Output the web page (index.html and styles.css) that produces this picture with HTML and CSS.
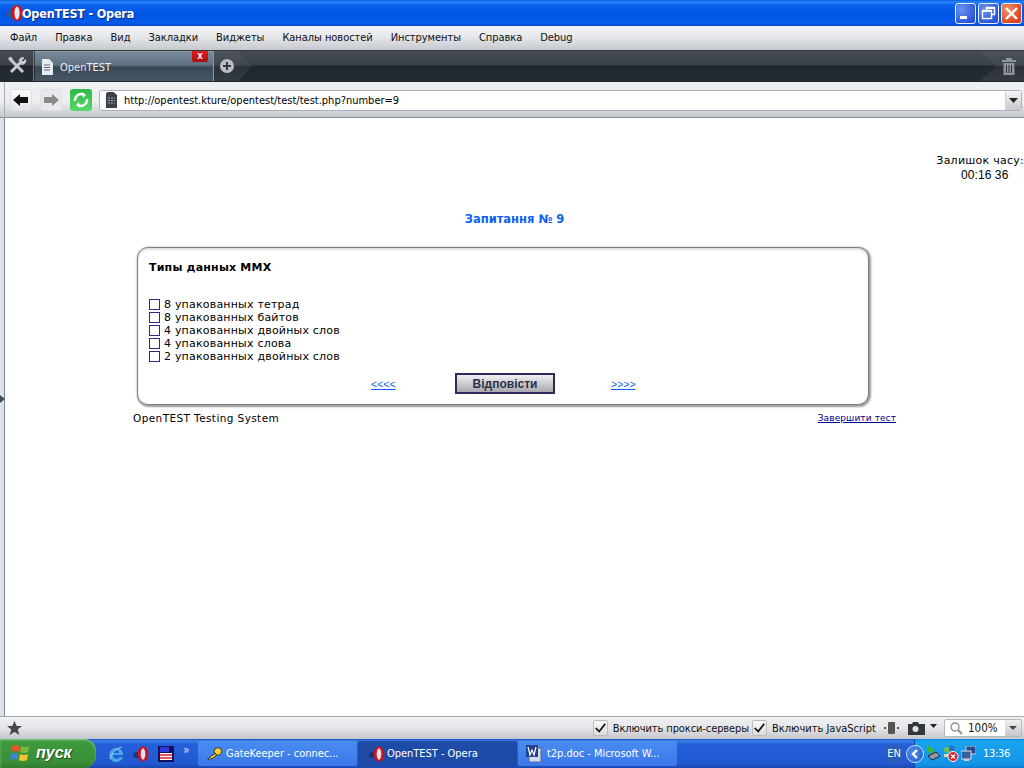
FILE: index.html
```html
<!DOCTYPE html>
<html lang="uk">
<head>
<meta charset="utf-8">
<title>OpenTEST - Opera</title>
<link rel="stylesheet" href="styles.css">
</head>
<body>
<div class="window">
  <header class="titlebar">
    <svg class="title-logo" width="20" height="20" viewBox="0 0 20 20"><ellipse cx="7" cy="11" rx="6" ry="4" fill="#555" opacity=".55"/><ellipse cx="12" cy="10" rx="6" ry="8" fill="#d0131b"/><ellipse cx="12" cy="10" rx="2.6" ry="6.4" fill="#dfe8f5"/></svg>
    <span class="title-text">OpenTEST - Opera</span>
    <div class="win-buttons">
      <span class="win-btn"><svg width="21" height="21" viewBox="0 0 21 21"><rect x="5" y="13" width="7" height="3" fill="#fff"/></svg></span>
      <span class="win-btn"><svg width="21" height="21" viewBox="0 0 21 21" fill="none" stroke="#fff"><path d="M8.5 7.5V4.5h8v7h-3" stroke-width="1.4"/><rect x="4.5" y="7.5" width="9" height="8" stroke-width="1.4"/><path d="M8.5 5h8M4.5 8h9" stroke-width="2"/></svg></span>
      <span class="win-btn win-close"><svg width="21" height="21" viewBox="0 0 21 21" stroke="#fff" stroke-width="2.4"><path d="M5 5l11 11M16 5L5 16"/></svg></span>
    </div>
  </header>
  <nav class="menubar">
    <span>Файл</span><span>Правка</span><span>Вид</span><span>Закладки</span><span>Виджеты</span><span>Каналы новостей</span><span>Инструменты</span><span>Справка</span><span>Debug</span>
  </nav>
  <div class="tabbar">
    <span class="tools"><svg width="20" height="20" viewBox="0 0 20 20" fill="none" stroke="#c8ccd0"><path d="M4 16L15 5" stroke-width="3"/><path d="M12 4.5a3.6 3.6 0 0 1 5 -2.5l-2.5 2.500 1.500 1.500 2.500-2.500a3.600 3.600 0 0 1-5 4.500" fill="#c8ccd0" stroke-width="1"/><path d="M3 3l13 13" stroke-width="3"/><path d="M1.500 2.500l2-1.500 2 2-2 2z" fill="#c8ccd0" stroke-width="1"/></svg></span>
    <div class="tab">
      <svg width="12" height="16" viewBox="0 0 12 16"><path d="M1 0h7l4 4v12H1z" fill="#e8ebee"/><path d="M3 6h6M3 8.500h6M3 11h6" stroke="#667" stroke-width="1"/></svg>
      <span class="tab-title">OpenTEST</span>
      <span class="tab-close">x</span>
    </div>
    <span class="new-tab"><svg width="14" height="14" viewBox="0 0 14 14"><circle cx="7" cy="7" r="7" fill="#b9bdc1"/><path d="M7 3v8M3 7h8" stroke="#33393f" stroke-width="2"/></svg></span>
    <span class="tab-spacer"></span>
    <span class="trash"><svg width="14" height="17" viewBox="0 0 14 17" fill="#8f9498"><rect x="0" y="2" width="14" height="2"/><rect x="4" y="0" width="6" height="2"/><path d="M1.500 5h11v12h-11zM4 7v8h1V7zM6.500 7v8h1V7zM9 7v8h1V7z" fill-rule="evenodd"/></svg></span>
  </div>
  <div class="addressbar">
    <span class="nav-btn"><svg width="16" height="12" viewBox="0 0 16 12"><path d="M0 6l7-6v3h8v6H7v3z" fill="#111"/></svg></span>
    <span class="nav-btn nav-off"><svg width="16" height="12" viewBox="0 0 16 12"><path d="M16 6L9 0v3H1v6h8v3z" fill="#8a8a8a"/></svg></span>
    <span class="nav-btn nav-reload"><svg width="18" height="18" viewBox="0 0 18 18" fill="none" stroke="#fff" stroke-width="2.400"><path d="M3 10a6 6 0 0 1 9-6"/><path d="M15 8a6 6 0 0 1-9 6"/><path d="M10 1l4 3-3 3z" fill="#fff" stroke="none"/><path d="M8 17l-4-3 3-3z" fill="#fff" stroke="none"/></svg></span>
    <div class="urlfield">
      <svg class="url-icon" width="11" height="16" viewBox="0 0 11 16"><path d="M0 1.500L1.500 0h6L11 3v13H0z" fill="#3c4148"/><path d="M2 6h7M2 8.500h7M2 11h7" stroke="#a9adb2" stroke-dasharray="2 1"/></svg>
      <span class="url-text">http://opentest.kture/opentest/test/test.php?number=9</span>
      <span class="url-drop"><svg width="9" height="5" viewBox="0 0 9 5"><path d="M0 0h9L4.500 5z" fill="#222"/></svg></span>
    </div>
  </div>
  <div class="workspace">
    <div class="rail"><span class="panel-arrow"></span></div>
    <main class="viewport">
      <div class="timer">
        <div>Залишок часу:</div>
        <div class="timer-value">00:16 36</div>
      </div>
      <h1 class="question-no">Запитання № 9</h1>
      <section class="card">
        <h2 class="question">Типы данных MMX</h2>
        <ul class="options">
          <li><input type="checkbox" class="opt-box"><span>8 упакованных тетрад</span></li>
          <li><input type="checkbox" class="opt-box"><span>8 упакованных байтов</span></li>
          <li><input type="checkbox" class="opt-box"><span>4 упакованных двойных слов</span></li>
          <li><input type="checkbox" class="opt-box"><span>4 упакованных слова</span></li>
          <li><input type="checkbox" class="opt-box"><span>2 упакованных двойных слов</span></li>
        </ul>
        <div class="actions">
          <a class="pager" href="#">&lt;&lt;&lt;&lt;</a>
          <button class="answer" type="button">Відповісти</button>
          <a class="pager" href="#">&gt;&gt;&gt;&gt;</a>
        </div>
      </section>
      <footer class="page-foot">
        <span>OpenTEST Testing System</span>
        <a class="finish" href="#">Завершити тест</a>
      </footer>
    </main>
  </div>
  <div class="statusbar">
    <svg class="star" width="15" height="15" viewBox="0 0 15 15"><path d="M7.500 0l2.200 5h5.300l-4.200 3.500 1.600 5.500-4.900-3-4.900 3 1.600-5.500L0 5h5.300z" fill="#44484d"/></svg>
    <span class="status-spacer"></span>
    <label class="status-check status-proxy"><span class="check-box"><svg width="15" height="14" viewBox="0 0 15 14"><path d="M2 7l4 4 7-9" fill="none" stroke="#111" stroke-width="2"/></svg></span>Включить прокси-серверы</label>
    <label class="status-check"><span class="check-box"><svg width="15" height="14" viewBox="0 0 15 14"><path d="M2 7l4 4 7-9" fill="none" stroke="#111" stroke-width="2"/></svg></span>Включить JavaScript</label>
    <svg class="status-ico" width="15" height="14" viewBox="0 0 15 14"><rect x="4" y="1" width="7" height="12" rx="1" fill="#555"/><path d="M0 7h2M13 7h2" stroke="#555" stroke-width="2"/></svg>
    <svg class="camera" width="17" height="13" viewBox="0 0 17 13"><path d="M0 2h4l1-2h5l1 2h6v11H0z" fill="#33373c"/><circle cx="7.500" cy="7" r="3" fill="#dfe1e4"/></svg>
    <svg class="cam-drop" width="7" height="4" viewBox="0 0 7 4"><path d="M0 0h7L3.500 4z" fill="#222"/></svg>
    <div class="zoom-field">
      <svg width="13" height="13" viewBox="0 0 13 13" fill="none" stroke="#8a8f96"><circle cx="5" cy="5" r="4" stroke-width="1.300"/><path d="M8 8l4 4" stroke-width="2"/></svg>
      <span class="zoom-value">100%</span>
      <span class="zoom-drop"><svg width="8" height="4" viewBox="0 0 8 4"><path d="M0 0h8L4 4z" fill="#444"/></svg></span>
    </div>
  </div>
  <div class="taskbar">
    <div class="start">
      <svg width="20" height="19" viewBox="0 0 20 19"><path d="M2 3q4-2 7 0v6q-3-2-8 0z" fill="#e5562d"/><path d="M11 3q4 2 8 0l-1 6q-4 2-8 0z" fill="#7cb83c"/><path d="M1 11q4-2 7 0v6q-3-2-8 0z" fill="#3f84d8"/><path d="M10 11q4 2 8 0l-1 6q-4 2-8 0z" fill="#f4c52c"/></svg>
      <span class="start-label">пуск</span>
    </div>
    <div class="quick">
      <svg width="16" height="16" viewBox="0 0 16 16"><path d="M15 9H5a3.500 3.500 0 0 0 6.500 2H15a7 7 0 1 1-1-6c1 1 1 3 1 4zM5 7h6a3 3 0 0 0-6 0z" fill="#46a9e6"/><path d="M2 13C3 7 9 2 14 1" fill="none" stroke="#9fd4f2"/></svg>
      <svg width="16" height="16" viewBox="0 0 16 16"><ellipse cx="4" cy="9" rx="4" ry="3" fill="#124" opacity=".6"/><ellipse cx="10" cy="8" rx="5.500" ry="7.500" fill="#d0131b"/><ellipse cx="10" cy="8" rx="2.300" ry="5.800" fill="#dbe5f5"/></svg>
      <svg width="16" height="16" viewBox="0 0 16 16"><rect width="16" height="16" fill="#10105c"/><rect x="2" y="1" width="9" height="5" fill="#2d3ad8"/><rect x="2" y="7" width="12" height="7" fill="#fff"/><path d="M2 9h12M2 12h12" stroke="#e01b24" stroke-width="1.500"/></svg>
      <span class="more">»</span>
    </div>
    <div class="task">
      <svg class="key" width="17" height="16" viewBox="0 0 20 16"><circle cx="14" cy="5" r="4.500" fill="#f6d32d" stroke="#222"/><path d="M11 7L2 14l2 1 2-2 1 1 2-2 1 0 2-3z" fill="#f6d32d" stroke="#222"/></svg>
      <span>GateKeeper - connec...</span>
    </div>
    <div class="task task-active">
      <svg width="16" height="16" viewBox="0 0 16 16"><ellipse cx="4" cy="9" rx="4" ry="3" fill="#124" opacity=".6"/><ellipse cx="10" cy="8" rx="5.500" ry="7.500" fill="#d0131b"/><ellipse cx="10" cy="8" rx="2.300" ry="5.800" fill="#dbe5f5"/></svg>
      <span>OpenTEST - Opera</span>
    </div>
    <div class="task task-doc">
      <svg width="16" height="17" viewBox="0 0 16 17"><rect x="3" y="3" width="12" height="14" fill="#cfdaf0" stroke="#667"/><rect x="0" y="0" width="12" height="12" fill="#23408f"/><path d="M2 2l2 8 2-5 2 5 2-8" fill="none" stroke="#fff" stroke-width="1.200"/></svg>
      <span>t2p.doc - Microsoft W...</span>
    </div>
    <span class="lang">EN</span>
    <div class="tray">
      <span class="tray-chevron"><svg width="10" height="10" viewBox="0 0 10 10"><path d="M7 1L3 5l4 4" fill="none" stroke="#fff" stroke-width="2.400"/></svg></span>
      <svg width="14" height="16" viewBox="0 0 14 16"><path d="M1 0l6 3-2 5-4-2z" fill="#3fb52f"/><path d="M1 10l8-4 4 4-8 4z" fill="#8f99a1" stroke="#223"/></svg>
      <svg class="tray-msn" width="16" height="17" viewBox="0 0 16 17"><circle cx="4" cy="5" r="3" fill="#6fbf4a"/><circle cx="9" cy="3.500" r="3" fill="#2c6fc8"/><path d="M1 9h10v3H1z" fill="#cfe0a8"/><circle cx="10" cy="11.500" r="5" fill="#d8222a" stroke="#fff"/><path d="M8 9.500l4 4M12 9.500l-4 4" stroke="#fff" stroke-width="1.400"/></svg>
      <svg width="15" height="16" viewBox="0 0 15 16"><rect x="5" y="0" width="10" height="8" fill="#264a90" stroke="#ccd"/><rect x="0" y="5" width="10" height="8" fill="#35619f" stroke="#dde"/><rect x="3" y="13" width="5" height="2" fill="#ccd"/></svg>
      <span class="clock">13:36</span>
    </div>
  </div>
</div>
</body>
</html>
```
FILE: styles.css
```css
* { box-sizing: border-box; }
html, body { margin: 0; padding: 0; height: 100%; overflow: hidden; }
body { font-family: "DejaVu Sans", sans-serif; font-size: 11px; color: #000; background: #fff; }
.window { width: 1024px; height: 768px; display: flex; flex-direction: column; }

/* title bar */
.titlebar { height: 26px; flex: none; display: flex; align-items: center; padding: 0 2px 0 5px;
  background: linear-gradient(#0a5be0 0, #2a86f8 2px, #0a62ea 5px, #0055e5 14px, #0258e8 20px, #0a5ce8 23px, #0043c8 26px); }
.title-logo { flex: none; margin-right: -3px; }
.title-text { font: bold 12.500px "DejaVu Sans Condensed", "DejaVu Sans", sans-serif; letter-spacing: -.2px; color: #fff; text-shadow: 1px 1px 0 #0a2a80; }
.win-buttons { margin-left: auto; display: flex; gap: 2px; }
.win-btn { width: 21px; height: 21px; border: 1px solid #e8eefc; border-radius: 3px; background: radial-gradient(circle at 30% 30%, #6d94ee, #2a55d6 75%); display: flex; align-items: center; justify-content: center; }
.win-btn svg { flex: none; }
.win-close { background: radial-gradient(circle at 30% 30%, #f0946c, #d8431c 75%); }

/* menu */
.menubar { height: 24px; flex: none; display: flex; align-items: center; gap: 18px; padding: 0 0 2px 10px;
  font: 11px "DejaVu Sans Condensed", sans-serif; letter-spacing: -.05px; color: #111; background: linear-gradient(#f1f2f4, #e9eaed 40%, #c5c8cd); }

/* tabs */
.tabbar { height: 32px; flex: none; display: flex; align-items: stretch; padding-left: 1px; border-top: 1px solid #33383e; border-bottom: 1px solid #20252b;
  background: linear-gradient(#444b54, #3a4149 45%, #20272e 50%, #262c33); }
.tools { width: 33px; display: flex; align-items: center; justify-content: center; border-right: 1px solid #707880; }
.tab { position: relative; width: 179px; margin-left: 1px; display: flex; align-items: center; padding: 0 0 0 6px; gap: 7px; color: #eef1f4; font: 11px "DejaVu Sans Condensed", sans-serif;
  background: linear-gradient(#78899a, #5f7183 45%, #394753 52%, #485866); border-right: 1px solid #8a97a3; border-top: 1px solid #8e9ba8; }
.tab-title { padding-top: 2px; }
.tab-close { position: absolute; right: 5px; top: -1px; width: 16px; height: 11px; background: linear-gradient(#e41c1c, #a80d0d); color: #fff; font: bold 10px/9px "Liberation Sans", sans-serif; text-align: center; border-radius: 0 0 2px 2px; }
.new-tab { width: 38px; display: flex; align-items: center; padding: 0 0 1px 6px; background: linear-gradient(#4d555e, #3f464f 48%, #2a3138 52%, #343b43); clip-path: polygon(0 0, 24px 0, 38px 50%, 24px 100%, 0 100%); }
.tab-spacer { flex: 1; }
.trash { width: 44px; display: flex; align-items: center; padding: 0 0 0 22px; background: linear-gradient(#4a525b, #3f464f 48%, #2a3138 52%, #343b43); clip-path: polygon(0 0, 100% 0, 100% 100%, 0 100%, 16px 50%); }

/* address */
.addressbar { height: 36px; flex: none; display: flex; align-items: center; padding: 0 2px 0 10px;
  background: linear-gradient(#a9aeb6, #a9aeb6) 4px 0 / 1px 100% no-repeat, linear-gradient(#eff0f2, #eceef0 55%, #c4c7cd 96%, #8b9098 97%); }
.nav-btn { width: 22px; height: 22px; flex: none; border-radius: 3px; display: flex; align-items: center; justify-content: center; margin-right: 8px; margin-top: -1px; background: linear-gradient(#fdfdfd, #e2e4e7); border: 1px solid #dcdee2; }
.nav-off { background: #e8e9ec; border-color: #e0e1e4; }
.nav-reload { background: linear-gradient(#2fb84a, #58d86a); border: 0; margin-right: 7px; }
.urlfield { flex: 1; height: 21px; margin-top: 0; display: flex; align-items: center; padding-left: 6px; background: #fff; border: 1px solid #aeb2bd; border-radius: 3px; }
.url-icon { flex: none; margin-right: 7px; }
.url-text { font: 11px "DejaVu Sans Condensed", sans-serif; color: #000; padding-top: 1px; }
.url-drop { margin-left: auto; width: 16px; height: 19px; display: flex; align-items: center; justify-content: center; border-left: 1px solid #d4d6da; background: linear-gradient(#f4f4f5, #c6c8cd); }

/* page */
.workspace { flex: 1; min-height: 0; display: flex; }
.rail { width: 5px; flex: none; position: relative; background: #dfe3e8; border-right: 1px solid #7a8794; }
.panel-arrow { position: absolute; left: 0; top: 277px; border: 4px solid transparent; border-left: 5px solid #44505c; border-right: 0; }
.viewport { flex: 1; min-width: 0; display: flex; flex-direction: column; background: #fff; padding-top: 36px; }
.timer { align-self: flex-end; text-align: center; line-height: 14px; letter-spacing: .25px; white-space: nowrap; }
.timer-value { font: 12px/14px "Liberation Sans", sans-serif; letter-spacing: .1px; padding-left: 9px; }
.question-no { margin: 29px 0 0; height: 16px; font-size: 11.500px; line-height: 16px; font-weight: bold; color: #0b62f0; text-align: center; }
.card { width: 732px; height: 158px; margin: 20px 0 0 132px; padding: 13px 11px 0; background: #fff; border: 1px solid #808080; border-radius: 11px;
  box-shadow: 1px 1px 2px 1px #9a9a9a, inset 0 2px 2px #e0e0e0; }
.question { margin: 0; font-size: 11px; line-height: 13px; font-weight: bold; letter-spacing: .2px; color: #000; }
.options { list-style: none; margin: 24px 0 0; padding: 0; }
.options li { height: 13px; display: flex; align-items: center; gap: 4px; line-height: 13px; letter-spacing: .2px; }
.opt-box { appearance: none; -webkit-appearance: none; width: 11px; height: 11px; margin: 0; flex: none; background: #fff; border: 1px solid #2c2c80; }
.actions { display: flex; align-items: center; margin: 10px 0 0 222px; }
.pager { font: 10.500px "Liberation Sans", sans-serif; color: #0b62f0; text-decoration: underline; width: 24px; }
.answer { width: 100px; height: 21px; margin: 0 56px 0 60px; padding: 0; border: 2px solid #2c2c5c; border-radius: 0; background: linear-gradient(#f0f0f2, #a8a8ae); color: #2c3048; font: bold 12px "Liberation Sans", sans-serif; }
.page-foot { display: flex; justify-content: space-between; align-items: center; width: 763px; margin: 7px 0 0 128px; line-height: 13px; font-size: 10.500px; letter-spacing: .4px; }
.finish { color: #000090; text-decoration: underline; font-size: 9px; letter-spacing: .1px; }

/* status */
.statusbar { height: 23px; flex: none; display: flex; align-items: center; padding: 0 2px 0 7px; border-top: 1px solid #a6a9af; background: linear-gradient(#f0f1f3, #e4e5e8 50%, #c3c6cb); font: 11px "DejaVu Sans Condensed", sans-serif; color: #111; }
.status-spacer { flex: 1; }
.status-check { display: flex; align-items: center; gap: 5px; margin-right: 3px; white-space: nowrap; }
.status-proxy { letter-spacing: -.1px; }
.check-box { width: 15px; height: 16px; display: flex; align-items: center; justify-content: center; background: linear-gradient(#fafafa, #dcdcdc); border: 1px solid #bbb; border-radius: 2px; }
.status-ico { margin: 0 9px 0 5px; flex: none; }
.camera { flex: none; }
.cam-drop { flex: none; margin: 0 7px 4px 5px; }
.zoom-field { width: 78px; height: 18px; display: flex; align-items: center; padding-left: 5px; gap: 5px; background: #fff; border: 1px solid #b5b8be; border-radius: 2px; font: 11.500px "DejaVu Sans Condensed", sans-serif; }
.zoom-drop { margin-left: auto; width: 16px; height: 16px; display: flex; align-items: center; justify-content: center; background: linear-gradient(#f0f0f2, #c6c8cd); }

/* taskbar */
.taskbar { height: 29px; flex: none; display: flex; align-items: center; color: #fff; font: 11px "DejaVu Sans Condensed", sans-serif;
  background: linear-gradient(#1b4fc0, #3a82e8 2px, #2560d8 5px, #2258d2 85%, #1a48b0); }
.start { width: 96px; height: 29px; flex: none; display: flex; align-items: center; gap: 6px; padding: 0 0 2px 10px; background: linear-gradient(#4a9a4a, #3c9a3c 10%, #3b8f38 80%, #2d7a2d); border-radius: 0 12px 12px 0; box-shadow: inset 0 1px 2px #8fce8f; }
.start-label { font: italic bold 16px "Liberation Sans", sans-serif; color: #fff; text-shadow: 1px 1px 1px #1a4d1a; }
.quick { width: 102px; flex: none; display: flex; align-items: center; gap: 9px; padding-left: 12px; }
.more { color: #cfe0fb; font-size: 12px; margin: -8px 0 0 0; }
.task { width: 159px; height: 25px; flex: none; display: flex; align-items: center; gap: 3px; padding: 0 0 0 8px; background: linear-gradient(#4a8cf0, #3a78ea); border-radius: 2px; margin-right: 1px; white-space: nowrap; letter-spacing: -.03px; }
.task-active { background: #1e4aa8; padding-left: 11px; gap: 2px; }
.task-doc { gap: 5px; }
.lang { margin-left: auto; margin-right: 12px; padding: 2px 1px; background: #2a5cb8; }
.tray { width: 110px; height: 29px; flex: none; display: flex; align-items: center; gap: 2px; background: linear-gradient(#0c8ae8, #18a4ee 10%, #1492e4 90%, #0e78d0); border-left: 1px solid #0a4aa0; }
.tray-chevron { width: 18px; height: 18px; margin-left: -9px; margin-right: 1px; flex: none; border-radius: 50%; background: radial-gradient(circle at 40% 40%, #4a8ef0, #1c5bc4); border: 1px solid #cfe2fb; display: flex; align-items: center; justify-content: center; }
.tray-msn { flex: none; }
.clock { margin-left: 5px; letter-spacing: -.3px; }
```
